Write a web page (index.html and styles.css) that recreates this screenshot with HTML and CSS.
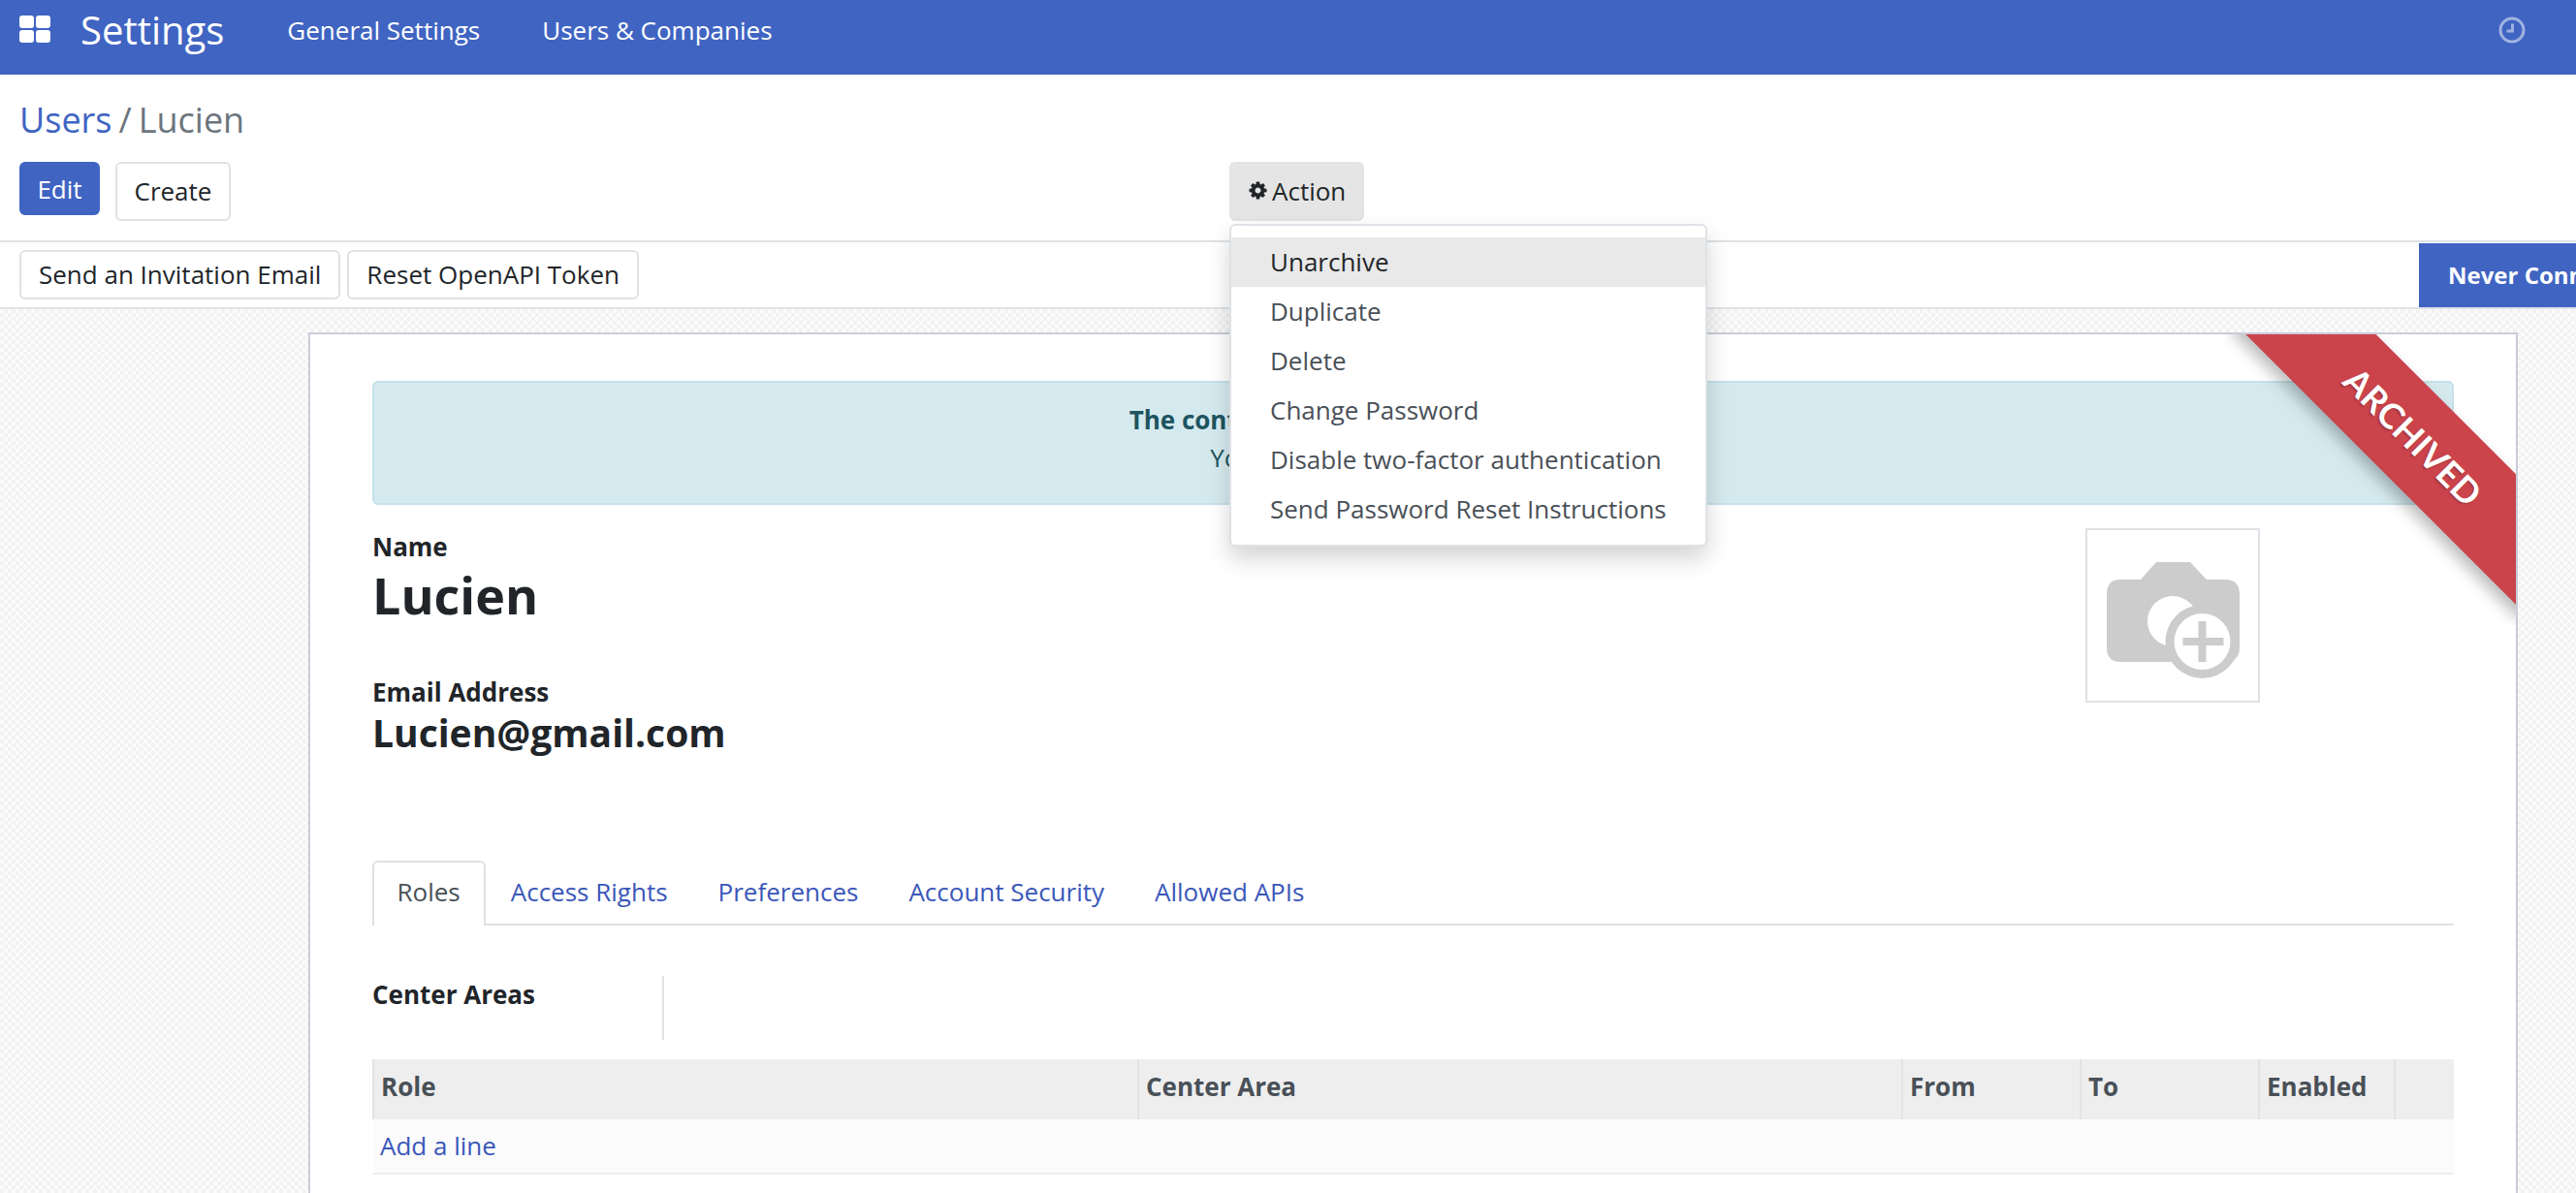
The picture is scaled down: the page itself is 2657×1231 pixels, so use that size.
FILE: index.html
```html
<!DOCTYPE html>
<html lang="en">
<head>
    <meta charset="UTF-8">
    <meta name="viewport" content="width=device-width, initial-scale=1.0">
    <title>Users / Lucien</title>
    <link rel="stylesheet" href="styles.css">
</head>
<body>
    <nav class="navbar">
        <svg class="apps-icon" viewBox="0 0 32 28" aria-hidden="true">
            <rect x="0" y="0" width="15" height="13" rx="3"/>
            <rect x="17" y="0" width="15" height="13" rx="3"/>
            <rect x="0" y="15" width="15" height="13" rx="3"/>
            <rect x="17" y="15" width="15" height="13" rx="3"/>
        </svg>
        <a class="brand">Settings</a>
        <a class="nav-link">General Settings</a>
        <a class="nav-link">Users &amp; Companies</a>
        <svg class="clock-icon" viewBox="0 0 28 28" aria-hidden="true">
            <circle cx="14" cy="14" r="12"/>
            <path d="M14.500 7.500V15H8.500"/>
        </svg>
    </nav>

    <header class="control-panel">
        <div class="breadcrumb"><a>Users</a><span class="sep">/</span><span class="current">Lucien</span></div>
        <div class="cp-buttons">
            <div class="cp-left">
                <button class="btn btn-primary">Edit</button>
                <button class="btn btn-secondary">Create</button>
            </div>
            <div class="dropdown">
                <button class="btn btn-action">
                    <svg class="gear-icon" viewBox="0 0 1792 1792" aria-hidden="true"><path fill-rule="evenodd" d="M1152 896q0-106-75-181t-181-75-181 75-75 181 75 181 181 75 181-75 75-181zm512-109v222q0 12-8 23t-20 13l-185 28q-19 54-39 91 35 50 107 138 10 12 10 25t-9 23q-27 37-99 108t-94 71q-12 0-26-9l-138-108q-44 23-91 38-16 136-29 186-7 28-36 28h-222q-14 0-24.500-8.500t-11.500-21.500l-28-184q-49-16-90-37l-141 107q-10 9-25 9-14 0-25-11-126-114-165-168-7-10-7-23 0-12 8-23 15-21 51-66.500t54-70.500q-27-50-41-99l-183-27q-13-2-21-12.500t-8-23.500v-222q0-12 8-23t19-13l186-28q14-46 39-92-40-57-107-138-10-12-10-24 0-10 9-23 26-36 98.500-107.500t94.500-71.500q13 0 26 10l138 107q44-23 91-38 16-136 29-186 7-28 36-28h222q14 0 24.500 8.500t11.500 21.500l28 184q49 16 90 37l142-107q9-9 24-9 13 0 25 10 129 119 165 170 7 8 7 22 0 12-8 23-15 21-51 66.500t-54 70.500q26 50 41 98l183 28q13 2 21 12.500t8 23.500z"/></svg>
                    Action
                </button>
                <div class="dropdown-menu">
                    <a class="dropdown-item active">Unarchive</a>
                    <a class="dropdown-item">Duplicate</a>
                    <a class="dropdown-item">Delete</a>
                    <a class="dropdown-item">Change Password</a>
                    <a class="dropdown-item">Disable two-factor authentication</a>
                    <a class="dropdown-item">Send Password Reset Instructions</a>
                </div>
            </div>
        </div>
    </header>

    <div class="statusbar">
        <div class="statusbar-buttons">
            <button class="btn btn-secondary btn-status">Send an Invitation Email</button>
            <button class="btn btn-secondary btn-status">Reset OpenAPI Token</button>
        </div>
        <div class="status-tag">Never Connected</div>
    </div>

    <main class="sheet-bg">
        <section class="sheet">
            <div class="ribbon"><span>Archived</span></div>

            <div class="alert">
                <div class="alert-title">The contact linked to this user is still active</div>
                <div>You can archive the contact Lucien</div>
            </div>

            <div class="head">
                <div class="head-fields">
                    <div class="label">Name</div>
                    <h1 class="name">Lucien</h1>
                    <div class="label email-label">Email Address</div>
                    <h2 class="email">Lucien@gmail.com</h2>
                </div>
                <div class="avatar">
                    <svg viewBox="0 0 176 176" aria-hidden="true">
                        <path class="cam" d="M34 51H55L71 33H106L123 51H142Q157 51 157 66V121Q157 136 142 136H34Q20 136 20 121V66Q20 51 34 51Z"/>
                        <circle class="cam-hole" cx="88" cy="94" r="26"/>
                        <circle class="cam" cx="118.500" cy="115" r="38"/>
                        <circle class="cam-hole" cx="118.500" cy="115" r="29"/>
                        <path class="cam" d="M114.500 94H122.500V111H140.500V119H122.500V136H114.500V119H98.500V111H114.500Z"/>
                    </svg>
                </div>
            </div>

            <ul class="tabs">
                <li class="tab active">Roles</li>
                <li class="tab">Access Rights</li>
                <li class="tab">Preferences</li>
                <li class="tab">Account Security</li>
                <li class="tab">Allowed APIs</li>
            </ul>

            <div class="group">
                <div class="group-label">Center Areas</div>
                <div class="group-value"></div>
            </div>

            <table class="list">
                <colgroup>
                    <col class="col-role">
                    <col class="col-area">
                    <col class="col-date">
                    <col class="col-date">
                    <col class="col-enabled">
                    <col>
                </colgroup>
                <thead>
                    <tr>
                        <th>Role</th>
                        <th>Center Area</th>
                        <th>From</th>
                        <th>To</th>
                        <th>Enabled</th>
                        <th></th>
                    </tr>
                </thead>
                <tbody>
                    <tr>
                        <td colspan="6"><a class="add-line">Add a line</a></td>
                    </tr>
                </tbody>
            </table>
        </section>
    </main>
</body>
</html>
```

FILE: styles.css
```css
html, body {
    height: 100%;
}
body {
    margin: 0;
    display: flex;
    flex-direction: column;
    overflow: hidden;
    background: #fff;
    font-family: "Open Sans", "Liberation Sans", sans-serif;
    font-size: 26px;
    line-height: 39px;
    color: #212529;
}
a {
    text-decoration: none;
}

/* top bar */
.navbar {
    flex: none;
    height: 77px;
    display: flex;
    align-items: flex-start;
    padding-left: 20px;
    background: #4064c2;
    color: #fff;
}
.apps-icon {
    width: 32px;
    height: 28px;
    margin-top: 16px;
    fill: #fff;
}
.brand {
    margin-left: 31px;
    font-size: 40px;
    line-height: 62px;
}
.nav-link {
    line-height: 63px;
}
.brand + .nav-link {
    margin-left: 65px;
}
.nav-link + .nav-link {
    margin-left: 64px;
}
.clock-icon {
    width: 28px;
    height: 28px;
    margin: 17px 52px 0 auto;
    fill: none;
    stroke: rgba(255, 255, 255, 0.5);
    stroke-width: 3;
}

/* control panel */
.control-panel {
    flex: none;
    height: 173px;
    padding: 0 20px;
    box-sizing: border-box;
    border-bottom: 2px solid #dee2e6;
}
.breadcrumb {
    height: 90px;
    padding-top: 22px;
    box-sizing: border-box;
    font-size: 36px;
    line-height: 50px;
    color: #6c757d;
}
.breadcrumb a {
    color: #4064c2;
}
.breadcrumb .sep {
    margin: 0 7px;
}
.cp-buttons {
    display: flex;
    align-items: flex-start;
}
.cp-left {
    width: 1248px;
    display: flex;
    align-items: flex-start;
    gap: 16px;
}
.btn {
    margin: 0;
    padding: 0 17.500px;
    border: 2px solid transparent;
    border-radius: 6px;
    box-sizing: border-box;
    font: inherit;
    color: inherit;
    background: none;
}
.btn-primary {
    width: 83px;
    height: 55px;
    padding: 0;
    background: #4064c2;
    color: #fff;
    line-height: 46px;
}
.btn-secondary {
    height: 61px;
    border-color: #dee2e6;
    background: #fff;
}
.btn-action {
    display: flex;
    align-items: center;
    gap: 4px;
    width: 139px;
    height: 61px;
    padding: 0 17px;
    background: #e5e5e5;
    border-color: #e3e3e3;
}
.gear-icon {
    width: 21px;
    height: 21px;
    margin-top: -3px;
    flex: none;
    fill: #212529;
}
.dropdown {
    position: relative;
}
.dropdown-menu {
    position: absolute;
    top: 64px;
    left: 0;
    z-index: 10;
    width: 493px;
    height: 333px;
    padding: 12px 0;
    box-sizing: border-box;
    background: #fff;
    border: 2px solid #dee2e6;
    border-radius: 6px;
    box-shadow: 0 12px 24px rgba(0, 0, 0, 0.175);
}
.dropdown-item {
    display: block;
    height: 51px;
    padding-left: 40px;
    line-height: 51px;
    color: #495057;
}
.dropdown-item.active {
    background: #e9e9e9;
    color: #212529;
}

/* buttons above the sheet */
.statusbar {
    flex: none;
    height: 69px;
    display: flex;
    overflow: hidden;
    box-sizing: border-box;
    border-bottom: 2px solid #dee2e6;
}
.statusbar-buttons {
    flex: none;
    width: 2495px;
    box-sizing: border-box;
    padding: 8px 0 0 20px;
    display: flex;
    align-items: flex-start;
    gap: 7px;
}
.btn-status {
    height: 51px;
    padding: 0 18px;
    line-height: 45px;
}
.status-tag {
    flex: none;
    width: 300px;
    height: 66px;
    margin-top: 1px;
    padding-left: 30px;
    box-sizing: border-box;
    background: #4064c2;
    color: #fff;
    font-size: 24px;
    font-weight: 700;
    line-height: 66px;
    white-space: nowrap;
}

/* sheet */
.sheet-bg {
    flex: 1;
    min-height: 0;
    overflow: hidden;
    padding: 24px 0 0 318px;
    background-color: #f9f9f9;
    background-image: conic-gradient(#f2f2f2 25%, #fbfbfb 0 50%, #f2f2f2 0 75%, #fbfbfb 0);
    background-size: 8px 8px;
}
.sheet {
    position: relative;
    width: 2279px;
    min-height: 1000px;
    box-sizing: border-box;
    padding: 48px 64px 0;
    background: #fff;
    border: 2px solid #c9ccd9;
    border-bottom: 0;
}
.ribbon {
    position: absolute;
    top: 0;
    right: 0;
    width: 300px;
    height: 300px;
    overflow: hidden;
}
.ribbon span {
    position: absolute;
    top: 58px;
    left: -18px;
    width: 424px;
    height: 95px;
    background: #cb434b;
    box-shadow: 0 8px 16px rgba(0, 0, 0, 0.28);
    color: #fff;
    font-family: Lato, "Open Sans", sans-serif;
    font-size: 36px;
    font-weight: 700;
    line-height: 95px;
    text-align: center;
    text-transform: uppercase;
    text-shadow: 0 2px 2px rgba(0, 0, 0, 0.2);
    transform: rotate(45deg);
}
.alert {
    height: 128px;
    padding: 19px 24px 0;
    box-sizing: border-box;
    background: #d5eaef;
    border: 2px solid #c5e2e9;
    border-radius: 6px;
    color: #1d545f;
    text-align: center;
}
.alert-title {
    padding-right: 24px;
    font-weight: 700;
}
.head {
    display: flex;
    justify-content: space-between;
    margin-top: 24px;
}
.label {
    font-weight: 700;
}
.name {
    margin: 0;
    font-size: 52px;
    line-height: 60px;
    font-weight: 700;
}
.email-label {
    margin-top: 51px;
}
.email {
    margin: 0;
    font-size: 39px;
    line-height: 44px;
    font-weight: 700;
}
.avatar {
    width: 180px;
    height: 180px;
    margin-right: 200px;
    box-sizing: border-box;
    border: 2px solid #dee2e6;
}
.avatar svg {
    display: block;
    width: 176px;
    height: 176px;
}
.cam {
    fill: #ccc;
}
.cam-hole {
    fill: #fff;
}

/* tabs */
.tabs {
    display: flex;
    margin: 110px 0 0;
    padding: 0;
    list-style: none;
    height: 67px;
    box-sizing: border-box;
    border-bottom: 2px solid #dee2e6;
}
.tab {
    height: 67px;
    padding: 0 24px;
    box-sizing: border-box;
    border: 2px solid transparent;
    border-bottom: 0;
    line-height: 60px;
    color: #3a57b9;
}
.tab.active {
    padding: 0 24px 0 23.500px;
    border-color: #dee2e6;
    border-radius: 6px 6px 0 0;
    background: #fff;
    color: #495057;
}

.group {
    display: flex;
    margin-top: 52px;
    height: 66px;
}
.group-label {
    width: 299px;
    border-right: 2px solid #dee2e6;
    font-weight: 700;
}
.list {
    width: 100%;
    margin-top: 20px;
    border-collapse: collapse;
    table-layout: fixed;
}
.col-role {
    width: 789px;
}
.col-area {
    width: 788px;
}
.col-date {
    width: 184px;
}
.col-enabled {
    width: 140px;
}
.list th {
    height: 62px;
    padding: 0 0 5px 7px;
    box-sizing: border-box;
    background: #eeeeef;
    border-right: 2px solid #e3e3e5;
    color: #495057;
    text-align: left;
    font-weight: 700;
}
.list th:first-child {
    border-left: 2px solid #e3e3e5;
}
.list th:last-child {
    border-right: 0;
}
.list td {
    height: 56px;
    padding: 0 0 0 7px;
    box-sizing: border-box;
    background: #fbfbfb;
    border-bottom: 2px solid #eeeeef;
}
.add-line {
    color: #3a57b9;
}
```
